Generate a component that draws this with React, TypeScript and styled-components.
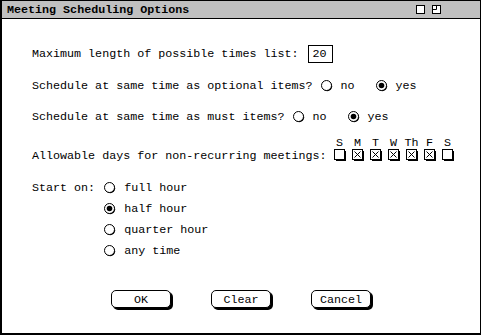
import styled, { createGlobalStyle } from "styled-components";

const GlobalStyle = createGlobalStyle`
  html, body {
    margin: 0;
    padding: 0;
    background: #ffffff;
  }
  body {
    font-family: "Liberation Mono", "Courier New", monospace;
    font-size: 11.7px;
    color: #000;
  }
`;

const Window = styled.div`
  width: 481px;
  height: 335px;
  box-sizing: border-box;
  border: 1px solid #000;
  border-left-width: 2px;
  border-bottom-width: 2px;
  background: #fff;
  display: flex;
  flex-direction: column;
`;

const TitleBar = styled.div`
  height: 17px;
  background: #c0c0c0;
  border-bottom: 1px solid #000;
  display: flex;
  align-items: center;
  padding: 0 39px 0 5px;
`;

const Title = styled.span`
  flex: 1;
  font-weight: bold;
  line-height: 17px;
  padding-top: 1px;
`;

const TitleIcons = styled.div`
  display: flex;
  gap: 7px;
`;

const Content = styled.div`
  display: flex;
  flex-direction: column;
  padding-left: 30px;
  line-height: 14px;
`;

const Row = styled.div<{ $mt: number; $align?: string }>`
  display: flex;
  align-items: ${(p) => p.$align ?? "center"};
  margin-top: ${(p) => p.$mt}px;
  white-space: pre;
`;

const Label = styled.span<{ $gap?: number }>`
  margin-right: ${(p) => p.$gap ?? 8}px;
`;

const NumberBox = styled.div`
  width: 25px;
  height: 18px;
  box-sizing: border-box;
  border: 1px solid #000;
  padding-left: 4px;
  line-height: 16px;
`;

const Option = styled.label<{ $ml?: number }>`
  display: flex;
  align-items: center;
  gap: 8px;
  margin-left: ${(p) => p.$ml ?? 0}px;
`;

const DayGroup = styled.div`
  display: flex;
  gap: 6px;
  margin-bottom: 2px;
`;

const DayColumn = styled.div`
  width: 12px;
  display: flex;
  flex-direction: column;
  align-items: center;
`;

const DayLetter = styled.span`
  line-height: 11px;
  height: 11px;
`;

const StartGrid = styled.div`
  display: flex;
  margin-top: 18px;
`;

const StartOptions = styled.div`
  display: flex;
  flex-direction: column;
  gap: 7px;
`;

const ButtonBar = styled.div`
  display: flex;
  justify-content: center;
  gap: 40px;
  margin-top: 32px;
  margin-left: -30px;
`;

const Button = styled.button`
  width: 60px;
  height: 18px;
  box-sizing: border-box;
  border: 1px solid #000;
  border-radius: 5px;
  box-shadow: 2px 2px 0 #000;
  background: #fff;
  font-family: inherit;
  font-size: 11.7px;
  line-height: 14px;
  padding: 1px 0 0;
  color: #000;
`;

function Radio({ on }: { on?: boolean }) {
  return (
    <svg width="12" height="12" viewBox="0 0 12 12">
      <circle cx="6.2" cy="6.2" r="5" fill="#000" />
      <circle cx="5.5" cy="5.5" r="5" fill="#fff" stroke="#000" strokeWidth="1" />
      {on && <circle cx="5.5" cy="5.5" r="2.8" fill="#000" />}
    </svg>
  );
}

function Check({ on }: { on?: boolean }) {
  return (
    <svg width="12" height="12" viewBox="0 0 12 12">
      <rect x="2" y="2" width="10" height="10" fill="#000" />
      <rect x="0.5" y="0.5" width="10" height="10" fill="#fff" stroke="#000" />
      {on && (
        <path d="M2.5 2.5 L8.5 8.5 M8.5 2.5 L2.5 8.5" stroke="#000" strokeWidth="1" />
      )}
    </svg>
  );
}

function MinimizeIcon() {
  return (
    <svg width="9" height="9" viewBox="0 0 9 9">
      <rect x="0.5" y="0.5" width="8" height="8" fill="#fff" stroke="#000" />
    </svg>
  );
}

function MaximizeIcon() {
  return (
    <svg width="9" height="9" viewBox="0 0 9 9">
      <rect x="0.5" y="0.5" width="8" height="8" fill="#fff" stroke="#000" />
      <path d="M4.5 0.5 V4.5 H0.5" fill="none" stroke="#000" />
    </svg>
  );
}

const days = [
  { d: "S", on: false },
  { d: "M", on: true },
  { d: "T", on: true },
  { d: "W", on: true },
  { d: "Th", on: true },
  { d: "F", on: true },
  { d: "S", on: false },
];

const startTimes = [
  { t: "full hour", on: false },
  { t: "half hour", on: true },
  { t: "quarter hour", on: false },
  { t: "any time", on: false },
];

export default function App() {
  return (
    <>
      <GlobalStyle />
      <Window>
        <TitleBar>
          <Title>Meeting Scheduling Options</Title>
          <TitleIcons>
            <MinimizeIcon />
            <MaximizeIcon />
          </TitleIcons>
        </TitleBar>
        <Content>
          <Row $mt={26}>
            <Label $gap={9}>Maximum length of possible times list:</Label>
            <NumberBox>20</NumberBox>
          </Row>
          <Row $mt={16}>
            <Label>Schedule at same time as optional items?</Label>
            <Option>
              <Radio />
              no
            </Option>
            <Option $ml={21}>
              <Radio on />
              yes
            </Option>
          </Row>
          <Row $mt={17}>
            <Label>Schedule at same time as must items?</Label>
            <Option>
              <Radio />
              no
            </Option>
            <Option $ml={21}>
              <Radio on />
              yes
            </Option>
          </Row>
          <Row $mt={14} $align="flex-end">
            <Label $gap={7}>Allowable days for non-recurring meetings:</Label>
            <DayGroup>
              {days.map((day, i) => (
                <DayColumn key={i}>
                  <DayLetter>{day.d}</DayLetter>
                  <Check on={day.on} />
                </DayColumn>
              ))}
            </DayGroup>
          </Row>
          <StartGrid>
            <Label $gap={9}>Start on:</Label>
            <StartOptions>
              {startTimes.map((s) => (
                <Option key={s.t}>
                  <Radio on={s.on} />
                  {s.t}
                </Option>
              ))}
            </StartOptions>
          </StartGrid>
          <ButtonBar>
            <Button>OK</Button>
            <Button>Clear</Button>
            <Button>Cancel</Button>
          </ButtonBar>
        </Content>
      </Window>
    </>
  );
}
